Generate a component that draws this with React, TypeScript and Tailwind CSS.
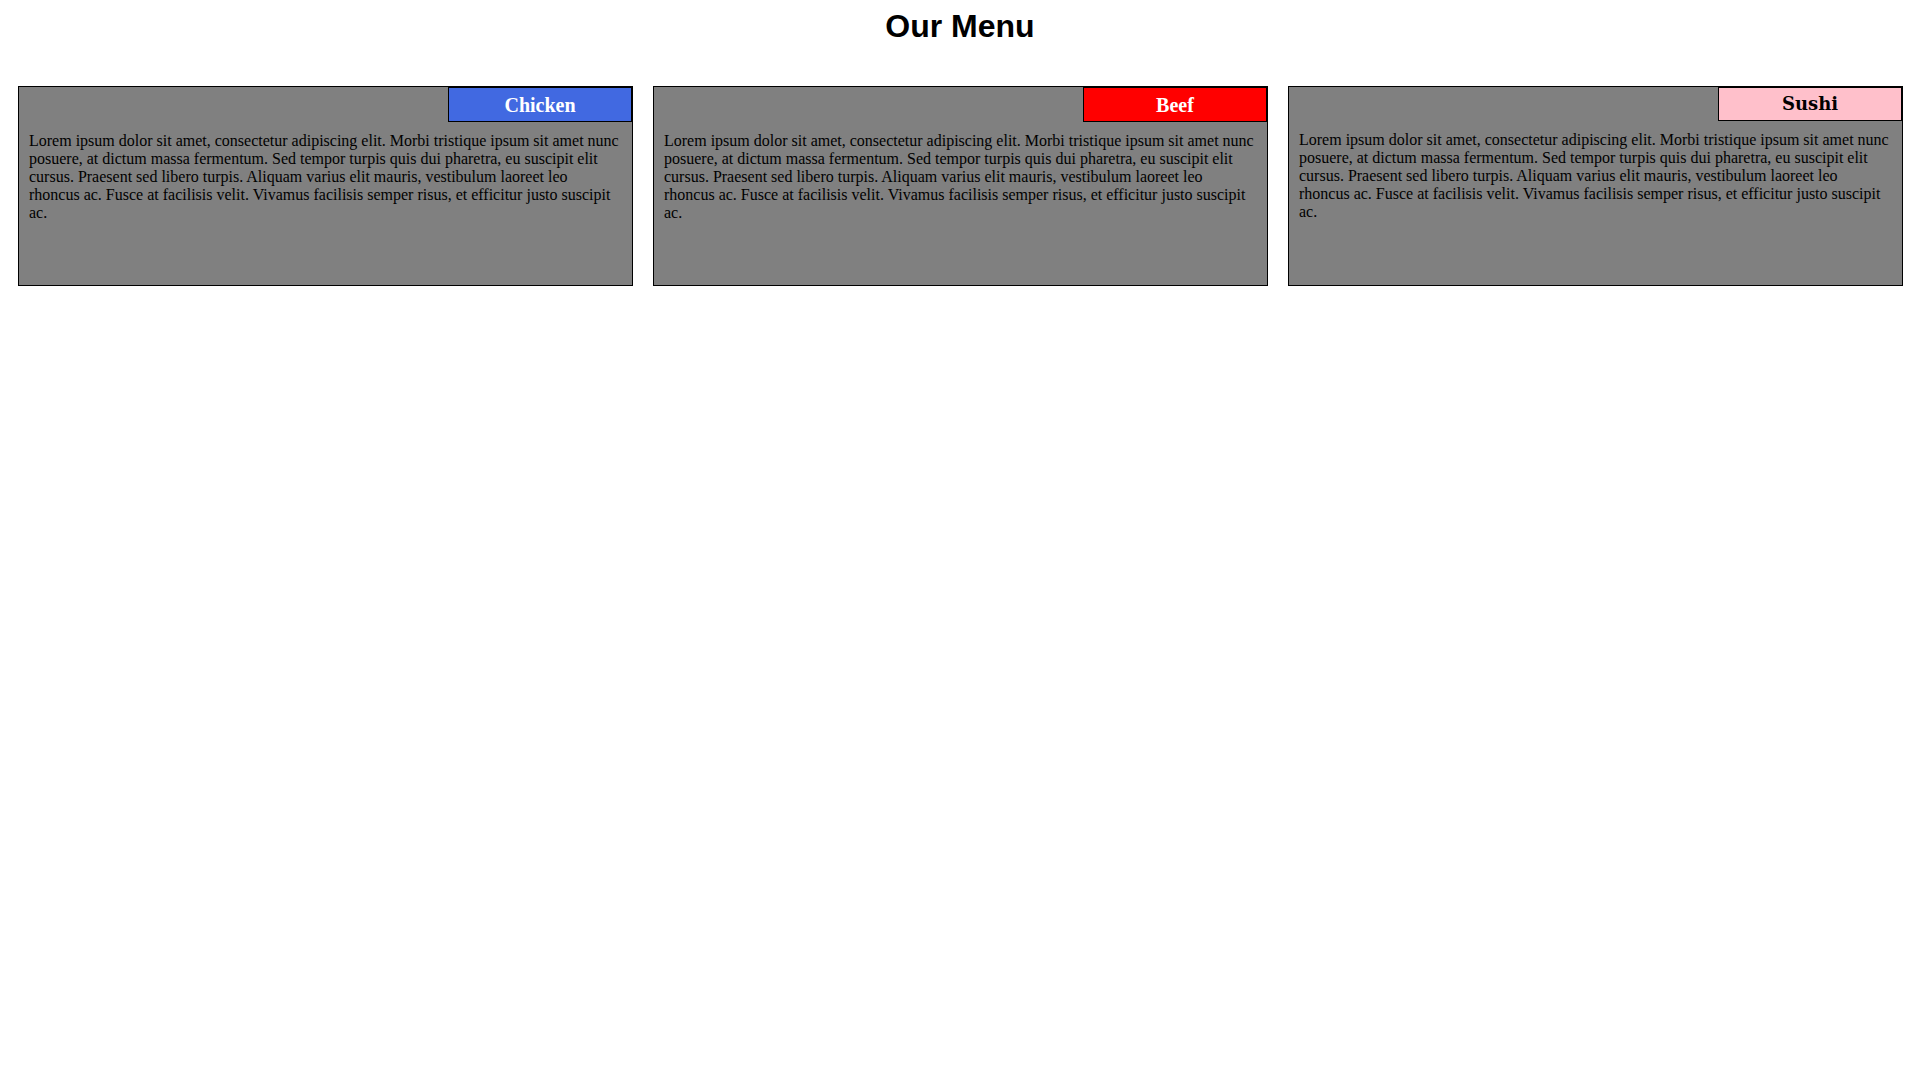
const lorem =
  'Lorem ipsum dolor sit amet, consectetur adipiscing elit. Morbi tristique ipsum sit amet nunc posuere, at dictum massa fermentum. Sed tempor turpis quis dui pharetra, eu suscipit elit cursus. Praesent sed libero turpis. Aliquam varius elit mauris, vestibulum laoreet leo rhoncus ac. Fusce at facilisis velit. Vivamus facilisis semper risus, et efficitur justo suscipit ac.'

interface MenuItem {
  name: string
  tabClass: string
}

const items: MenuItem[] = [
  {
    name: 'Chicken',
    tabClass: "h-[35px] bg-[#4169e1] text-white text-[20px] font-['Liberation_Serif',serif]",
  },
  {
    name: 'Beef',
    tabClass: "h-[35px] bg-[#ff0000] text-white text-[20px] font-['Liberation_Serif',serif]",
  },
  {
    name: 'Sushi',
    tabClass: "h-[34px] bg-[#ffc0cb] text-black text-[18px] font-['DejaVu_Serif',serif]",
  },
]

function MenuCard({ item }: { item: MenuItem }) {
  return (
    <div className="h-[200px] border border-black bg-[#808080]">
      {/* Tab in the top right corner */}
      <div className="flex justify-end">
        <div
          className={
            'flex w-[184px] items-center justify-center border border-black font-bold leading-none ' +
            item.tabClass
          }
        >
          {item.name}
        </div>
      </div>
      <p className="mt-[10px] px-[10px] font-['Liberation_Serif',serif] text-[16px] leading-[18px] text-black">
        {lorem}
      </p>
    </div>
  )
}

export default function App() {
  return (
    <div className="min-h-screen bg-white">
      <h1 className="pt-[8px] text-center font-['Liberation_Sans',Arial,sans-serif] text-[32px] font-bold leading-[37px] text-black">
        Our Menu
      </h1>

      <div className="mt-[41px] grid grid-cols-3 gap-5 pl-[18px] pr-[17px]">
        {items.map((item) => (
          <MenuCard key={item.name} item={item} />
        ))}
      </div>
    </div>
  )
}
